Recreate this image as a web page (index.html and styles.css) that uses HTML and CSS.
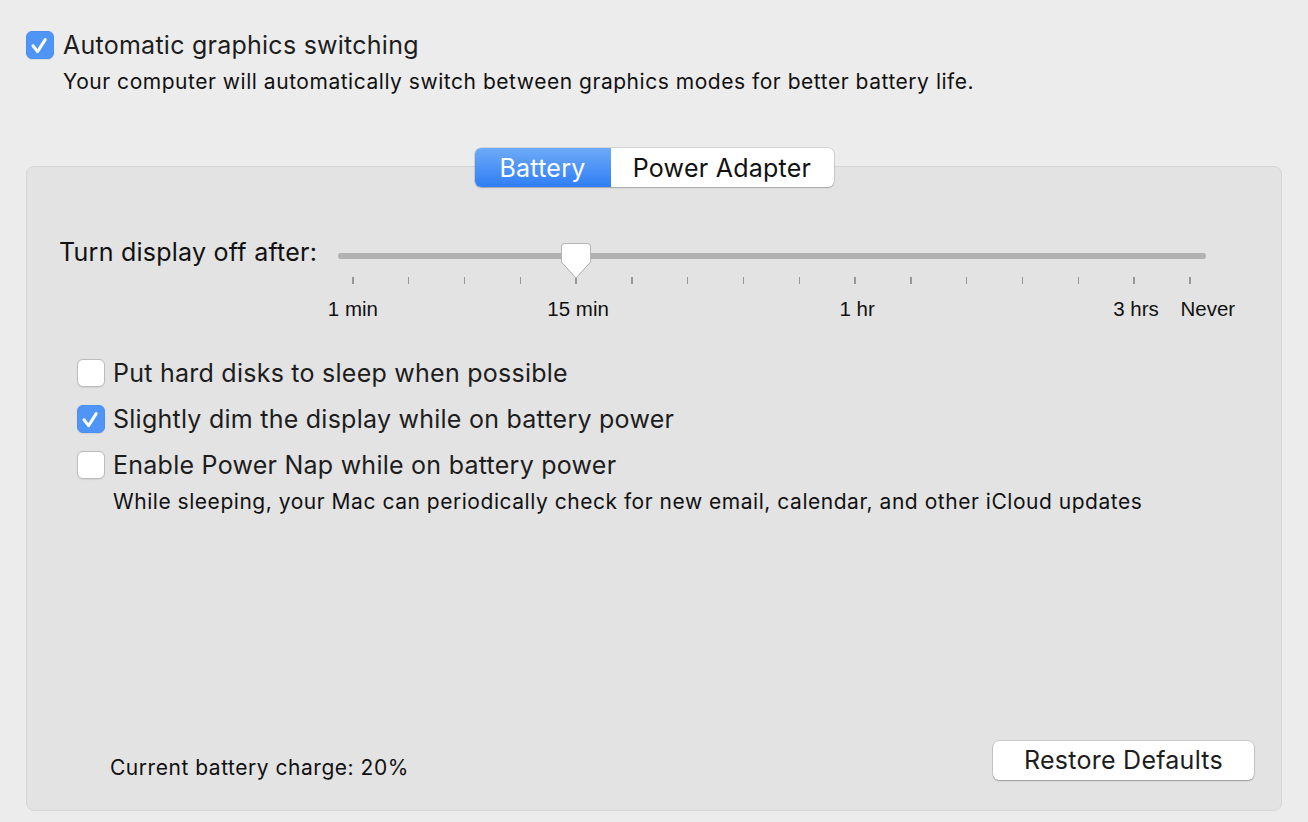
FILE: index.html
```html
<!DOCTYPE html>
<html>
<head>
<meta charset="utf-8">
<link rel="stylesheet" href="styles.css">
</head>
<body>
<div class="page">
  <div class="top">
    <div class="check-row">
      <span class="cb checked"><svg viewBox="0 0 28 28"><path d="M7 14.8 L11.6 20.6 L19.2 8.6" fill="none" stroke="#fff" stroke-width="3" stroke-linecap="round" stroke-linejoin="round"/></svg></span>
      <span class="title">Automatic graphics switching</span>
    </div>
    <div class="desc top-desc">Your computer will automatically switch between graphics modes for better battery life.</div>
  </div>

  <div class="panel">
    <div class="tabs">
      <div class="tab active">Battery</div>
      <div class="tab">Power Adapter</div>
    </div>

    <div class="slider-row">
      <div class="slider-label">Turn display off after:</div>
      <div class="slider">
        <div class="track"></div>
        <div class="thumb"><svg viewBox="0 0 30 36"><path d="M3.5 0.5 H26.5 Q29.5 0.5 29.5 3.5 V19 L15 35 L0.5 19 V3.5 Q0.5 0.5 3.5 0.5 Z" fill="#fff" stroke="#b4b4b4" stroke-width="1"/></svg></div>
      </div>
    </div>
    <div class="ticks">
      <span></span><span></span><span></span><span></span><span></span><span></span><span></span><span></span>
      <span></span><span></span><span></span><span></span><span></span><span></span><span></span><span></span>
    </div>
    <div class="tick-labels">
      <span class="c1">1 min</span>
      <span class="c5">15 min</span>
      <span class="c10">1 hr</span>
      <span class="c15">3 hrs</span>
      <span class="c16">Never</span>
    </div>

    <div class="options">
      <div class="check-row">
        <span class="cb"></span>
        <span class="opt-label">Put hard disks to sleep when possible</span>
      </div>
      <div class="check-row">
        <span class="cb checked"><svg viewBox="0 0 28 28"><path d="M7 14.8 L11.6 20.6 L19.2 8.6" fill="none" stroke="#fff" stroke-width="3" stroke-linecap="round" stroke-linejoin="round"/></svg></span>
        <span class="opt-label">Slightly dim the display while on battery power</span>
      </div>
      <div class="check-row">
        <span class="cb"></span>
        <span class="opt-label">Enable Power Nap while on battery power</span>
      </div>
      <div class="desc opt-desc">While sleeping, your Mac can periodically check for new email, calendar, and other iCloud updates</div>
    </div>

    <div class="bottom">
      <div class="desc charge">Current battery charge: 20%</div>
      <button class="restore">Restore Defaults</button>
    </div>
  </div>
</div>
</body>
</html>
```

FILE: styles.css
```css
* { box-sizing: border-box; }
html, body { margin: 0; padding: 0; }
body {
  background: #ececec;
  width: 1308px;
  height: 822px;
  overflow: hidden;
  font-family: "Inter", "Noto Sans", sans-serif;
  color: #1d1d1d;
}
.page {
  padding: 31px 26px 0 26px;
}
.check-row {
  display: flex;
  align-items: center;
  height: 28px;
}
.cb {
  width: 28px;
  height: 28px;
  flex: none;
  border-radius: 6px;
  background: #fff;
  border: 1px solid #bcbcbc;
  box-shadow: 0 0.5px 1px rgba(0,0,0,0.08);
  display: flex;
  align-items: center;
  justify-content: center;
}
.cb.checked {
  background: #4f95f6;
  border-color: #4a8ff2;
}
.cb svg { width: 28px; height: 28px; display: block; flex: none; }
.title, .opt-label, .slider-label, .tab, .restore {
  font-size: 25px;
  letter-spacing: 0.25px;
  line-height: 28px;
}
.title { margin-left: 9px; }
.desc {
  font-size: 21px;
  letter-spacing: 0.53px;
  line-height: 24px;
  color: #111;
}
.top-desc {
  margin-top: 11px;
  margin-left: 37px;
}
.panel {
  margin-top: 72px;
  width: 1256px;
  height: 645px;
  background: #e3e3e3;
  border: 1px solid #d6d6d6;
  border-radius: 8px;
  display: flex;
  flex-direction: column;
}
.tabs {
  align-self: center;
  margin-top: -19px;
  display: flex;
  height: 39px;
  border-radius: 6px;
  background: #fff;
  box-shadow: 0 0 0 0.5px rgba(0,0,0,0.18), 0 1px 1.5px rgba(0,0,0,0.2);
  overflow: hidden;
}
.tab {
  display: flex;
  align-items: center;
  justify-content: center;
  color: #111;
}
.tab.active {
  width: 136px;
  color: #fff;
  background: linear-gradient(#6eabf8, #2f7ef5);
}
.tab:not(.active) { width: 223px; }

.slider-row {
  display: flex;
  align-items: center;
  margin-top: 50px;
  margin-left: 32px;
  height: 30px;
}
.slider-label {
  width: 279px;
  color: #111;
}
.slider {
  position: relative;
  width: 868px;
  height: 30px;
  display: flex;
  align-items: center;
}
.track {
  width: 100%;
  height: 6px;
  border-radius: 3px;
  background: #b1b1b1;
  margin-top: 8px;
}
.thumb {
  position: absolute;
  left: 223px;
  top: 6px;
  width: 30px;
  height: 36px;
}
.thumb svg { width: 30px; height: 36px; display: block; filter: drop-shadow(0 0.5px 0.5px rgba(0,0,0,0.15)); }

.ticks, .tick-labels {
  display: grid;
  grid-template-columns: repeat(16, 55.8px);
  margin-left: 298px;
}
.ticks { margin-top: 10px; height: 7px; }
.ticks span {
  justify-self: center;
  width: 1.5px;
  height: 7px;
  background: #969696;
}
.tick-labels {
  margin-top: 13px;
  height: 24px;
  font-family: "Liberation Sans", Arial, sans-serif;
  font-size: 20.5px;
  color: #111;
}
.tick-labels span {
  display: flex;
  justify-content: center;
  white-space: nowrap;
}
.c1 { grid-column: 1; }
.c5 { grid-column: 5; margin-left: 4px; }
.c10 { grid-column: 10; margin-left: 4px; }
.c15 { grid-column: 15; margin-left: 4px; }
.c16 { grid-column: 16; margin-left: 36px; }

.options {
  margin-top: 38px;
  margin-left: 50px;
  display: flex;
  flex-direction: column;
  gap: 18px;
}
.opt-label {
  margin-left: 8px;
}
.opt-desc {
  margin-top: -7px;
  margin-left: 36px;
}
.bottom {
  margin-top: auto;
  margin-bottom: 30px;
  display: flex;
  align-items: center;
  padding-left: 83px;
  padding-right: 27px;
  justify-content: space-between;
}
.charge {
  margin-top: 16px;
}
.restore {
  width: 261px;
  height: 39px;
  font-family: inherit;
  color: #1d1d1d;
  background: #fff;
  border: none;
  border-radius: 6px;
  box-shadow: 0 0 0 0.5px rgba(0,0,0,0.2), 0 1px 1.5px rgba(0,0,0,0.25);
  padding: 0;
}
```
